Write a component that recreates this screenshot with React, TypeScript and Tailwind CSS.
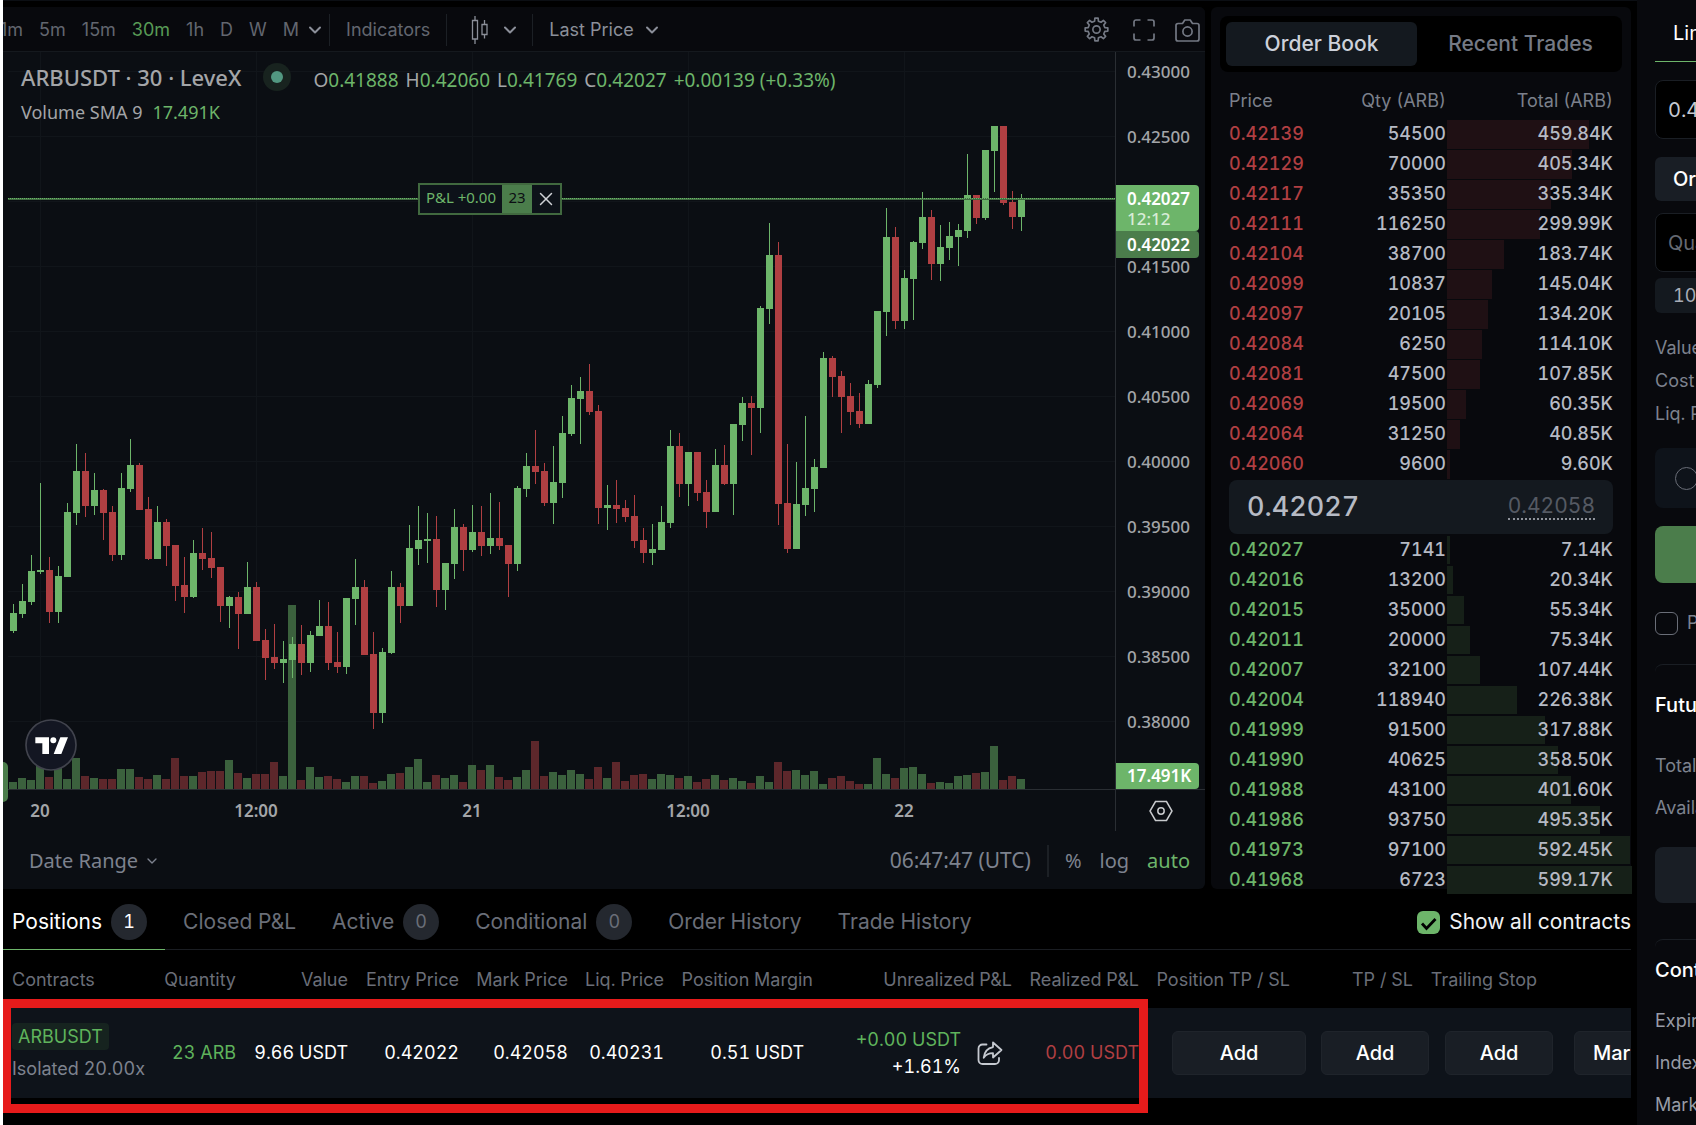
import { useState } from "react";
import { ChevronDown, X } from "lucide-react";

// [direction, high, body top, body bottom, low, volume height] in chart pixels
type Candle = [number, number, number, number, number, number];

const CANDLES: Candle[] = [
  [1, 604, 613, 631, 633, 7], [1, 584, 601, 614, 618, 11], [1, 555, 571, 602, 605, 9], [1, 483, 570, 572, 574, 26],
  [0, 557, 570, 612, 623, 12], [1, 566, 576, 612, 623, 22], [1, 503, 512, 577, 577, 10], [1, 444, 471, 513, 525, 31],
  [0, 453, 471, 506, 517, 13], [1, 473, 490, 506, 515, 11], [0, 489, 490, 513, 540, 10], [0, 506, 512, 555, 561, 10],
  [1, 473, 488, 555, 560, 20], [1, 439, 465, 489, 492, 20], [0, 463, 465, 510, 510, 12], [0, 497, 509, 559, 560, 10],
  [1, 506, 522, 559, 559, 14], [0, 519, 522, 546, 566, 10], [0, 545, 545, 586, 601, 31], [0, 557, 585, 597, 613, 13],
  [1, 540, 553, 597, 598, 13], [0, 528, 553, 559, 570, 17], [0, 532, 558, 568, 578, 18], [0, 567, 567, 606, 622, 18],
  [1, 596, 597, 606, 628, 29], [0, 592, 597, 614, 649, 16], [1, 562, 587, 614, 614, 11], [0, 582, 587, 641, 641, 15],
  [0, 629, 640, 658, 680, 15], [0, 624, 657, 663, 669, 27], [1, 641, 659, 663, 683, 13], [1, 637, 644, 660, 678, 184],
  [0, 625, 644, 663, 675, 9], [1, 631, 635, 663, 672, 22], [1, 600, 626, 636, 636, 12], [0, 602, 626, 663, 670, 13],
  [0, 632, 662, 667, 673, 10], [1, 598, 598, 667, 674, 7], [1, 559, 587, 599, 625, 13], [0, 580, 587, 655, 655, 13],
  [0, 632, 654, 713, 729, 6], [1, 648, 652, 713, 723, 8], [1, 571, 587, 653, 654, 15], [0, 583, 587, 606, 623, 16],
  [1, 525, 548, 606, 606, 22], [1, 506, 540, 549, 565, 30], [1, 513, 539, 541, 563, 7], [0, 516, 539, 590, 607, 14],
  [1, 563, 563, 590, 610, 11], [1, 509, 527, 564, 579, 14], [0, 524, 527, 550, 571, 7], [1, 505, 532, 550, 552, 24],
  [0, 506, 532, 546, 556, 19], [1, 493, 538, 546, 554, 24], [0, 502, 538, 546, 550, 12], [0, 545, 545, 564, 597, 9],
  [1, 486, 488, 564, 571, 12], [1, 453, 466, 489, 497, 19], [0, 430, 466, 472, 484, 48], [0, 463, 471, 503, 506, 13],
  [1, 446, 482, 503, 524, 17], [1, 416, 433, 483, 498, 14], [1, 385, 398, 434, 436, 19], [1, 377, 391, 399, 444, 15],
  [0, 364, 391, 412, 415, 10], [0, 405, 411, 508, 524, 22], [1, 485, 505, 508, 530, 11], [0, 480, 505, 509, 523, 27],
  [0, 500, 508, 517, 522, 8], [0, 495, 516, 541, 548, 14], [0, 528, 540, 553, 563, 15], [1, 524, 549, 553, 565, 10],
  [1, 506, 522, 550, 550, 15], [1, 430, 446, 523, 528, 14], [0, 433, 446, 484, 497, 11], [1, 452, 452, 484, 506, 13],
  [0, 452, 452, 493, 501, 7], [0, 480, 492, 512, 528, 10], [1, 449, 465, 512, 512, 14], [0, 445, 465, 484, 485, 9],
  [1, 424, 424, 484, 515, 11], [1, 397, 403, 425, 441, 8], [0, 396, 403, 408, 455, 6], [1, 306, 308, 408, 433, 13],
  [1, 223, 255, 309, 324, 7], [0, 242, 255, 504, 525, 27], [0, 444, 503, 549, 553, 18], [1, 462, 504, 549, 549, 19],
  [1, 416, 488, 505, 516, 14], [1, 459, 467, 489, 512, 18], [1, 352, 358, 468, 468, 5], [0, 356, 358, 377, 397, 11],
  [0, 371, 376, 397, 433, 13], [0, 383, 396, 412, 425, 8], [0, 393, 411, 424, 428, 5], [1, 380, 384, 424, 424, 5],
  [1, 311, 311, 385, 388, 31], [1, 208, 237, 312, 336, 15], [0, 227, 237, 321, 329, 11], [1, 270, 278, 321, 329, 21],
  [1, 241, 242, 279, 320, 22], [1, 192, 217, 243, 249, 15], [0, 210, 217, 264, 280, 6], [1, 225, 247, 264, 281, 7],
  [1, 222, 236, 248, 260, 6], [1, 224, 230, 237, 266, 13], [1, 154, 195, 231, 238, 14], [0, 195, 195, 218, 224, 16],
  [1, 150, 150, 218, 220, 17], [1, 126, 126, 151, 192, 43], [0, 126, 126, 203, 205, 9], [0, 191, 202, 217, 229, 13],
  [1, 194, 198, 217, 231, 10],
];

const ASKS: [string, string, string][] = [
  ["0.42139", "54500", "459.84K"],
  ["0.42129", "70000", "405.34K"],
  ["0.42117", "35350", "335.34K"],
  ["0.42111", "116250", "299.99K"],
  ["0.42104", "38700", "183.74K"],
  ["0.42099", "10837", "145.04K"],
  ["0.42097", "20105", "134.20K"],
  ["0.42084", "6250", "114.10K"],
  ["0.42081", "47500", "107.85K"],
  ["0.42069", "19500", "60.35K"],
  ["0.42064", "31250", "40.85K"],
  ["0.42060", "9600", "9.60K"],
];

const BIDS: [string, string, string][] = [
  ["0.42027", "7141", "7.14K"],
  ["0.42016", "13200", "20.34K"],
  ["0.42015", "35000", "55.34K"],
  ["0.42011", "20000", "75.34K"],
  ["0.42007", "32100", "107.44K"],
  ["0.42004", "118940", "226.38K"],
  ["0.41999", "91500", "317.88K"],
  ["0.41990", "40625", "358.50K"],
  ["0.41988", "43100", "401.60K"],
  ["0.41986", "93750", "495.35K"],
  ["0.41973", "97100", "592.45K"],
  ["0.41968", "6723", "599.17K"],
];

const INTERVALS = ["1m", "5m", "15m", "30m", "1h", "D", "W", "M"];
const PRICES = ["0.43000", "0.42500", "", "0.41500", "0.41000", "0.40500", "0.40000", "0.39500", "0.39000", "0.38500", "0.38000"];
const TIMES = ["20", "12:00", "21", "12:00", "22"];

const TABS: { name: string; count?: number }[] = [
  { name: "Positions", count: 1 },
  { name: "Closed P&L" },
  { name: "Active", count: 0 },
  { name: "Conditional", count: 0 },
  { name: "Order History" },
  { name: "Trade History" },
];

// widest bar (599.17K) fills the cell and runs into the panel padding
const barWidth = (total: string) => `${Math.max(3, Math.round(parseFloat(total) * 0.309))}px`;

// eight teeth: two outer points and two inner points each
const GEAR = Array.from({ length: 8 }, (_, k) =>
  [[-13, 8.2], [-8, 11], [8, 11], [13, 8.2]].map(([deg, r]) => {
    const a = ((k * 45 + deg) * Math.PI) / 180;
    return `${(12 + r * Math.sin(a)).toFixed(2)},${(12 - r * Math.cos(a)).toFixed(2)}`;
  }).join(" ")
).join(" ");

function GearIcon() {
  return (
    <svg width="25" height="25" viewBox="0 0 24 24" fill="none" stroke="currentColor" strokeWidth="1.600" strokeLinejoin="round">
      <polygon points={GEAR} />
      <circle cx="12" cy="12" r="3.500" />
    </svg>
  );
}

function FullscreenIcon() {
  return (
    <svg width="22" height="22" viewBox="0 0 22 22" fill="none" stroke="currentColor" strokeWidth="1.700">
      <path d="M1 7.500V3a2 2 0 0 1 2-2h4.500M14.500 1H19a2 2 0 0 1 2 2v4.500M21 14.500V19a2 2 0 0 1-2 2h-4.500M7.500 21H3a2 2 0 0 1-2-2v-4.500" />
    </svg>
  );
}

function CameraIcon() {
  return (
    <svg width="25" height="24" viewBox="0 0 25 24" fill="none" stroke="currentColor" strokeWidth="1.700" strokeLinejoin="round">
      <path d="M3 5.500h4.500L9.800 2h5.400l2.300 3.500H22a2 2 0 0 1 2 2V21a2 2 0 0 1-2 2H3a2 2 0 0 1-2-2V7.500a2 2 0 0 1 2-2z" />
      <circle cx="12.500" cy="13.500" r="4.600" />
    </svg>
  );
}

function CandleIcon() {
  return (
    <svg width="17" height="28" viewBox="0 0 17 28" fill="none" stroke="currentColor" strokeWidth="1.300">
      <path d="M4 0v4.500M4 23v5M13.500 4v4.500M13.500 18.500v4" />
      <path d="M1.500 4.500h5V23h-5zM11 8.500h5v10h-5z" />
    </svg>
  );
}

function ShareIcon() {
  return (
    <svg width="26" height="26" viewBox="0 0 26 26" fill="none" stroke="#c5c9d0" strokeWidth="1.800" strokeLinecap="round" strokeLinejoin="round">
      <path d="M9.500 4.500H5.500a4 4 0 0 0-4 4v11.500a4 4 0 0 0 4 4h12.500a4 4 0 0 0 4-4v-2" />
      <path d="M16 2.500l8.500 7.500-8.500 7.500v-4.300c-4.200 0-7 1.300-9.300 4.600.6-5.800 3.900-9.700 9.300-10.700z" />
    </svg>
  );
}

function CandleChart() {
  return (
    <svg className="block h-[737px] w-[1112px]" viewBox="3 52 1112 737" shapeRendering="crispEdges">
      {PRICES.map((_, i) => (
        <rect key={i} x="8" y={71 + i * 65} width="1107" height="1" fill="#11151a" />
      ))}
      {TIMES.map((_, i) => (
        <rect key={i} x={40 + i * 216} y="52" width="1" height="737" fill="#11151a" />
      ))}
      {CANDLES.map(([up, , , , , vol], i) => (
        <rect key={i} x={9 + i * 9} y={789 - vol} width="8" height={vol} fill={up ? "#3b613d" : "#5d272b"} />
      ))}
      {CANDLES.map(([up, high, top, bottom, low], i) => (
        <g key={i} fill={up ? "#6db56a" : "#b03f42"}>
          <rect x={13 + i * 9} y={high} width="1" height={low - high} />
          <rect x={10 + i * 9} y={top} width="7" height={bottom - top} />
        </g>
      ))}
      <rect x="8" y="198" width="1107" height="2" fill="#3f6b40" />
      <path d="M8 198.500H1115" stroke="#6db56a" strokeDasharray="1 1" />
    </svg>
  );
}

function ChartPanel() {
  const [interval, setInterval] = useState("30m");
  return (
    <section className="relative min-w-0 flex-1 overflow-hidden rounded-r-md bg-[#0b0e13]">
      <div className="flex h-[45px] items-center border-b border-[#15191e] bg-[#08090d] pt-px text-lg text-[#62666f] proportional-nums">
        <div className="-ml-[3px] flex gap-4">
          {INTERVALS.map((item) => (
            <button key={item} onClick={() => setInterval(item)} className={item === interval ? "text-[#589b56]" : ""}>
              {item}
            </button>
          ))}
        </div>
        <button aria-label="More intervals" className="ml-1.5 text-[#8b8f99]">
          <ChevronDown size={20} strokeWidth={2.4} />
        </button>
        <div className="ml-1 h-8 w-px bg-[#1c2025]" />
        <button className="ml-4">Indicators</button>
        <div className="ml-4 h-8 w-px bg-[#1c2025]" />
        <button aria-label="Chart type" className="ml-6 flex items-center gap-3 text-[#8b8f99]">
          <CandleIcon />
          <ChevronDown size={20} strokeWidth={2.4} />
        </button>
        <div className="ml-3 h-8 w-px bg-[#1c2025]" />
        <button className="ml-4 flex items-center gap-2 text-[#8b8f99]">
          Last Price
          <ChevronDown size={20} strokeWidth={2.4} />
        </button>
        <div className="mr-[5px] ml-auto flex items-center gap-6 text-[#737883]">
          <button aria-label="Settings"><GearIcon /></button>
          <button aria-label="Fullscreen"><FullscreenIcon /></button>
          <button aria-label="Snapshot" className="-ml-1"><CameraIcon /></button>
        </div>
      </div>

      <div className="flex font-['Noto_Sans',sans-serif]">
        <div className="relative min-w-0 flex-1 overflow-hidden">
          <CandleChart />
          <div className="absolute top-1.5 left-[18px] flex items-center whitespace-nowrap text-[#a3a5a8]">
            <h1 className="text-[22px] leading-8 font-medium">ARBUSDT · 30 · LeveX</h1>
            <span className="mx-[22px] flex size-7 items-center justify-center rounded-full bg-[#18231f]">
              <span className="size-3 rounded-full bg-[#529881]" />
            </span>
            <p className="flex gap-[7px] pt-1.5 text-[19px] leading-8">
              <span>O<b className="font-normal text-[#6db56a]">0.41888</b></span>
              <span>H<b className="font-normal text-[#6db56a]">0.42060</b></span>
              <span>L<b className="font-normal text-[#6db56a]">0.41769</b></span>
              <span>C<b className="font-normal text-[#6db56a]">0.42027</b></span>
              <span className="text-[#6db56a]">+0.00139 (+0.33%)</span>
            </p>
          </div>
          <p className="absolute top-12 left-[18px] flex gap-2.5 text-[18px] leading-6 text-[#a3a5a8]">
            Volume SMA 9 <span className="text-[#6db56a]">17.491K</span>
          </p>

          <div className="absolute top-[131px] left-[415px] flex h-8 w-36 border-2 border-[#41693f] bg-[#0d1219] text-[15px] leading-6 text-[#6db56a]">
            <span className="flex-1 text-center">P&amp;L +0.00</span>
            <span className="w-[30px] bg-[#4b7d4b] text-center text-[#0b0e13]">23</span>
            <button aria-label="Close position" className="flex w-7 items-center justify-center text-[#d0d2d6]">
              <X size={22} strokeWidth={1.6} />
            </button>
          </div>

          <svg className="absolute bottom-[18px] left-[22px]" width="52" height="52" viewBox="0 0 156 156">
            <circle cx="78" cy="78" r="75" fill="#131622" stroke="#41434d" strokeWidth="5" />
            <path d="M31 55h41v50H52V73H31zM106 55h23l-20 50H86z" fill="#fff" />
            <circle cx="85" cy="64" r="9" fill="#fff" />
          </svg>
        </div>

        <div className="relative h-[737px] w-[90px] overflow-hidden border-l border-[#2a2e33] pl-[11px] text-[17px] font-medium text-[#a3a5a8]">
          <div className="-mt-[13px]">
            {PRICES.map((price, i) => (
              <div key={i} className="flex h-[65px] items-center">{price}</div>
            ))}
          </div>
          <div className="absolute top-[133px] left-0 w-[83px] rounded-r-sm bg-[#6db56a] pt-1 pb-0.5 pl-[11px] leading-5 font-semibold text-white">
            0.42027
            <div className="font-medium text-[#d8ecd7]">12:12</div>
          </div>
          <div className="absolute top-[179px] left-0 w-[83px] rounded-r-sm bg-[#4b7d4b] pl-[11px] leading-[27px] font-semibold text-white">
            0.42022
          </div>
          <div className="absolute bottom-0 left-0 w-[83px] rounded-r-sm bg-[#6db56a] pl-[11px] leading-[26px] font-semibold text-white">
            17.491K
          </div>
        </div>
      </div>

      <div className="flex h-[42px] border-t border-[#2a2e33] font-['Noto_Sans',sans-serif]">
        <div className="flex min-w-0 flex-1 items-center overflow-hidden">
          <div className="-ml-[71px] flex text-[17px] font-semibold text-[#a3a5a8]">
            {TIMES.map((time, i) => (
              <span key={i} className="w-[216px] flex-none text-center">{time}</span>
            ))}
          </div>
        </div>
        <div className="flex w-[90px] items-center justify-center border-l border-[#2a2e33]">
          <button aria-label="Scale settings">
            <svg width="24" height="22" viewBox="0 0 24 22" fill="none" stroke="#c8cacd" strokeWidth="1.500">
              <path d="M6.500 1.500h11L23 11l-5.500 9.500h-11L1 11z" />
              <circle cx="12" cy="11" r="3.200" />
            </svg>
          </button>
        </div>
      </div>

      <div className="flex h-[57px] items-center pt-0.5 pl-[26px] font-['Noto_Sans',sans-serif] text-xl text-[#7d828e]">
        <button className="flex items-center gap-1.5">
          Date Range
          <ChevronDown size={16} />
        </button>
        <div className="mr-[15px] ml-auto flex items-center">
          <span className="text-[21px]">06:47:47 (UTC)</span>
          <span className="mr-4 ml-4 h-8 w-0.5 bg-[#1c2025]" />
          <button>%</button>
          <button className="ml-[18px]">log</button>
          <button className="ml-[18px] text-[#6db56a]">auto</button>
        </div>
      </div>

      <div className="absolute top-[755px] left-0 h-10 w-[5px] rounded-r-md bg-[#4b7d4b]" />
    </section>
  );
}

function BookRows({ rows, side }: { rows: [string, string, string][]; side: "ask" | "bid" }) {
  return (
    <tbody>
      {rows.map(([price, qty, total]) => (
        <tr key={price} className="h-[30px]">
          <td className={side === "ask" ? "p-0 text-[#b03f42]" : "p-0 text-[#6db56a]"}>{price}</td>
          <td className="p-0 pr-px text-right">{qty}</td>
          <td className="relative p-0 text-right">
            <span
              className={side === "ask" ? "absolute top-px left-0 h-[29px] bg-[#1f1014]" : "absolute top-px left-0 h-7 bg-[#162018]"}
              style={{ width: barWidth(total) }}
            />
            <span className="relative">{total}</span>
          </td>
        </tr>
      ))}
    </tbody>
  );
}

function OrderBook() {
  const [tab, setTab] = useState("Order Book");
  return (
    <section className="h-[882px] w-[420px] flex-none rounded-md bg-[#08090d] px-[9px] pt-[9px]">
      <div className="grid h-14 grid-cols-2 gap-2 rounded-lg bg-black p-1.5 text-[21px] font-medium">
        {["Order Book", "Recent Trades"].map((name) => (
          <button
            key={name}
            onClick={() => setTab(name)}
            className={name === tab ? "rounded-md bg-[#14191f] text-[#cdd1da]" : "rounded-md text-[#757a85]"}
          >
            {name}
          </button>
        ))}
      </div>
      <div className="px-[9px] text-lg font-medium text-[#b6bac4]">
        <table className="mt-2.5 w-full table-fixed">
          <thead>
            <tr className="h-[37px] text-[#7b808b]">
              <th className="w-[100px] p-0 text-left font-normal">Price</th>
              <th className="w-[118px] p-0 pr-px text-right font-normal">Qty (ARB)</th>
              <th className="p-0 text-right font-normal">Total (ARB)</th>
            </tr>
          </thead>
          <BookRows rows={ASKS} side="ask" />
        </table>
        <div className="my-px flex h-[54px] items-center justify-between rounded-lg bg-[#14191f] px-[18px]">
          <span className="text-[27px]">0.42027</span>
          <span className="border-b-2 border-dotted border-[#8f939b] text-[21px] leading-6 font-normal text-[#555a63]">0.42058</span>
        </div>
        <table className="w-full table-fixed">
          <colgroup>
            <col className="w-[100px]" />
            <col className="w-[118px]" />
            <col />
          </colgroup>
          <BookRows rows={BIDS} side="bid" />
        </table>
      </div>
    </section>
  );
}

function Positions() {
  const [tab, setTab] = useState("Positions");
  return (
    <section className="relative h-[236px]">
      <div className="flex h-[61px] items-stretch border-b border-[#1a1d22] text-[21px] text-[#6a6e78]">
        {TABS.map(({ name, count }) => (
          <button
            key={name}
            onClick={() => setTab(name)}
            className={
              name === tab
                ? "-mb-px flex items-center gap-[9px] border-b border-[#6db56a] pt-1.5 pr-[18px] pl-[9px] text-white"
                : "flex items-center gap-[9px] px-[18px] pt-1.5"
            }
          >
            {name}
            {count !== undefined && (
              <span className="flex size-9 items-center justify-center rounded-full bg-[#24282f] text-lg">{count}</span>
            )}
          </button>
        ))}
        <label className="ml-auto flex items-center gap-[9px] pt-1.5 text-[#f0f1f3]">
          <span className="relative flex size-[23px]">
            <input type="checkbox" defaultChecked className="peer size-[23px] appearance-none rounded-md border border-[#6a6e78] checked:border-0 checked:bg-[#6db56a]" />
            <svg className="pointer-events-none absolute inset-0 hidden peer-checked:block" width="23" height="23" viewBox="0 0 23 23" fill="none" stroke="#000" strokeWidth="2.800">
              <path d="M5 12.500l4.500 5L18.500 8" />
            </svg>
          </span>
          Show all contracts
        </label>
      </div>

      <div className="overflow-hidden">
        <table className="w-[1700px] table-fixed text-right text-lg whitespace-nowrap text-white">
          <colgroup>
            <col className="w-[153px]" />
            <col className="w-[89px]" />
            <col className="w-[112px]" />
            <col className="w-[111px]" />
            <col className="w-[109px]" />
            <col className="w-[96px]" />
            <col className="w-[149px]" />
            <col className="w-[199px]" />
            <col className="w-[127px]" />
            <col className="w-[158px]" />
            <col className="w-[123px]" />
            <col className="w-[124px]" />
            <col />
          </colgroup>
          <thead>
            <tr className="h-[58px] text-[#6a6e78] *:pt-0.5 *:font-normal">
              <th className="pl-[9px] text-left">Contracts</th>
              <th className="pr-[9px]">Quantity</th>
              <th className="pr-[9px]">Value</th>
              <th className="pr-[9px]">Entry Price</th>
              <th className="pr-[9px]">Mark Price</th>
              <th className="pr-[9px]">Liq. Price</th>
              <th className="pr-[9px]">Position Margin</th>
              <th className="pr-[9px]">Unrealized P&amp;L</th>
              <th className="pr-[9px]">Realized P&amp;L</th>
              <th className="pr-4">Position TP / SL</th>
              <th className="pr-4">TP / SL</th>
              <th className="pr-4">Trailing Stop</th>
              <th />
            </tr>
          </thead>
          <tbody>
            <tr className="h-[90px] bg-[#0e131a]">
              <td className="pl-[9px] text-left">
                <a href="#arbusdt" className="inline-block rounded bg-[#16231f] px-1.5 leading-[27px] text-[#5fb35c]">ARBUSDT</a>
                <div className="mt-1 pb-0.5 leading-[27px] text-[#7d828e]">Isolated 20.00x</div>
              </td>
              <td className="pr-[9px] text-[#5fb35c]">23 ARB</td>
              <td className="pr-[9px]">9.66 USDT</td>
              <td className="pr-[9px]">0.42022</td>
              <td className="pr-[9px]">0.42058</td>
              <td className="pr-[9px]">0.40231</td>
              <td className="pr-[18px]">0.51 USDT</td>
              <td className="pr-[18px]">
                <div className="flex items-center justify-end gap-4">
                  <div className="leading-[27px]">
                    <div className="text-[#5fb35c]">+0.00 USDT</div>
                    <div>+1.61%</div>
                  </div>
                  <button aria-label="Share"><ShareIcon /></button>
                </div>
              </td>
              <td className="pr-[9px] text-[#b03f42]">0.00 USDT</td>
              <td>
                <button className="h-11 w-[134px] rounded-md border border-[#1f242b] bg-[#191e25] text-xl font-medium">Add</button>
              </td>
              <td>
                <button className="h-11 w-[108px] rounded-md border border-[#1f242b] bg-[#191e25] text-xl font-medium">Add</button>
              </td>
              <td>
                <button className="h-11 w-[108px] rounded-md border border-[#1f242b] bg-[#191e25] text-xl font-medium">Add</button>
              </td>
              <td className="pl-[21px] text-left">
                <button className="h-11 w-28 rounded-md border border-[#1f242b] bg-[#191e25] px-[18px] text-left text-xl font-medium">Market</button>
              </td>
            </tr>
          </tbody>
        </table>
      </div>
      <div className="pointer-events-none absolute top-[110px] -left-px h-[114px] w-[1146px] border-[9px] border-[#e61b1b]" />
    </section>
  );
}

function OrderForm() {
  return (
    <aside className="w-[59px] flex-none overflow-hidden bg-[#08090d]">
      <div className="w-[360px] pl-[18px] text-lg text-[#7d828e]">
        <div className="flex h-[62px] border-b border-[#6db56a] pt-1 pl-[18px] text-xl text-white">
          <button>Limit</button>
        </div>
        <input aria-label="Price" defaultValue="0.42022" className="mt-[18px] block h-[59px] w-full rounded-lg border border-[#1a1e24] bg-black px-3 text-xl text-[#c5c9d2]" />
        <button className="mt-[18px] block h-11 rounded-md bg-[#191e25] px-[18px] text-xl font-medium text-white">Order by Qty</button>
        <input aria-label="Quantity" placeholder="Quantity" className="mt-3 block h-[59px] w-full rounded-lg border border-[#1a1e24] bg-black px-3 text-xl placeholder:text-[#666a73]" />
        <button className="mt-1.5 block h-[35px] rounded-md bg-[#14191f] px-[18px] text-[#a9adb7]">10%</button>
        <ul className="mt-[18px] leading-[33px]">
          <li>Value</li>
          <li>Cost</li>
          <li>Liq. Price</li>
        </ul>
        <label className="mt-[18px] flex h-[60px] items-center gap-2 rounded-lg bg-[#0e131a] pl-5">
          <input type="radio" className="size-[23px] appearance-none rounded-full border border-[#6a6e78]" />
          TP / SL
        </label>
        <button aria-label="Buy" className="mt-[18px] block h-[57px] w-full rounded-lg bg-[#4b7d4b]" />
        <label className="mt-7 flex h-6 items-center gap-[9px]">
          <input type="checkbox" className="size-[23px] appearance-none rounded-md border border-[#6a6e78]" />
          Post-Only
        </label>
        <div className="mt-[29px] h-[275px] rounded-tl-lg border-t border-[#1a1e24] pt-[26px]">
          <h2 className="text-xl leading-7 font-medium text-white">Futures</h2>
          <p className="mt-[34px] leading-[26px]">Total</p>
          <p className="mt-4 leading-[26px]">Available</p>
          <button aria-label="Deposit" className="mt-[26px] block h-14 w-full rounded-lg bg-[#191e25]" />
        </div>
        <div className="rounded-tl-lg border-t border-[#1a1e24] pt-4 text-[#989ca6]">
          <h2 className="text-xl leading-7 font-medium text-white">Contract</h2>
          <ul className="mt-4 leading-[42px]">
            <li>Expiry</li>
            <li>Index</li>
            <li>Mark</li>
          </ul>
        </div>
      </div>
    </aside>
  );
}

export default function App() {
  return (
    <div className="flex h-screen overflow-hidden border-l-[3px] border-white bg-black font-['Inter',sans-serif] tabular-nums">
      <main className="min-w-0 flex-1 border-t border-[#0b0e13] pr-1.5">
        <div className="mt-1.5 flex gap-1.5">
          <ChartPanel />
          <OrderBook />
        </div>
        <Positions />
      </main>
      <OrderForm />
    </div>
  );
}
